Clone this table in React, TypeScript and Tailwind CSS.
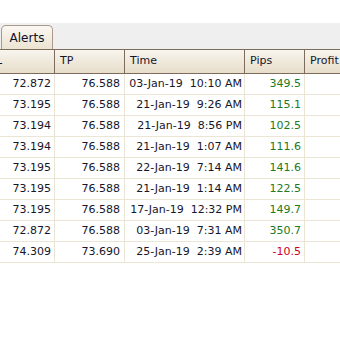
import React from 'react';

type Row = { sl: string; tp: string; time: string; pips: string };

const rows: Row[] = [
  { sl: '72.872', tp: '76.588', time: '03-Jan-19  10:10 AM', pips: '349.5' },
  { sl: '73.195', tp: '76.588', time: '21-Jan-19  9:26 AM', pips: '115.1' },
  { sl: '73.194', tp: '76.588', time: '21-Jan-19  8:56 PM', pips: '102.5' },
  { sl: '73.194', tp: '76.588', time: '21-Jan-19  1:07 AM', pips: '111.6' },
  { sl: '73.195', tp: '76.588', time: '22-Jan-19  7:14 AM', pips: '141.6' },
  { sl: '73.195', tp: '76.588', time: '21-Jan-19  1:14 AM', pips: '122.5' },
  { sl: '73.195', tp: '76.588', time: '17-Jan-19  12:32 PM', pips: '149.7' },
  { sl: '72.872', tp: '76.588', time: '03-Jan-19  7:31 AM', pips: '350.7' },
  { sl: '74.309', tp: '73.690', time: '25-Jan-19  2:39 AM', pips: '-10.5' }
];

const App = () => {
  return (
    <div className="w-[340px] h-[364px] bg-white overflow-hidden font-['DejaVu_Sans',sans-serif] text-[11px] text-[#16162a]">
      <div className="h-[23px]"></div>

      {/* Tab strip */}
      <div className="h-[26px] bg-[#efefef] flex items-end pl-[1px]">
        <div className="w-[52px] h-[24px] rounded-t-[5px] border border-b-0 border-[#a8998a] bg-gradient-to-b from-[#fbf8f2] to-[#ece3d1] flex items-center justify-center text-[12px] text-[#10102a]">
          Alerts
        </div>
      </div>

      {/* Header (first column is scrolled off, only the tail of "SL" shows) */}
      <div className="flex h-[25px] border-y border-[#7d6b5c] bg-gradient-to-b from-[#f8f5ee] to-[#e7ddca]">
        <div className="w-[55px] shrink-0 border-r border-[#7d6b5c] overflow-hidden flex items-center">
          <span className="ml-[-11px] whitespace-nowrap">SL</span>
        </div>
        <div className="w-[70px] shrink-0 border-r border-[#7d6b5c] flex items-center pl-[5px]">TP</div>
        <div className="w-[120px] shrink-0 border-r border-[#7d6b5c] flex items-center pl-[5px]">Time</div>
        <div className="w-[60px] shrink-0 border-r border-[#7d6b5c] flex items-center pl-[5px]">Pips</div>
        <div className="flex-1 flex items-center pl-[5px] whitespace-nowrap overflow-hidden">Profit</div>
      </div>

      {/* Body */}
      {rows.map((r, i) => (
        <div key={i} className="flex h-[21px] border-b border-[#ebe5d6]">
          <div className="w-[55px] shrink-0 border-r border-[#ebe5d6] flex items-center justify-end pr-[3px]">{r.sl}</div>
          <div className="w-[70px] shrink-0 border-r border-[#ebe5d6] flex items-center justify-end pr-[4px]">{r.tp}</div>
          <div className="w-[120px] shrink-0 border-r border-[#ebe5d6] flex items-center justify-end pr-[2px] whitespace-pre">{r.time}</div>
          <div
            className={`w-[60px] shrink-0 border-r border-[#ebe5d6] flex items-center justify-end pr-[3px] ${
              r.pips.startsWith('-') ? 'text-[#d0021b]' : 'text-[#217a1f]'
            }`}
          >
            {r.pips}
          </div>
          <div className="flex-1"></div>
        </div>
      ))}
    </div>
  );
};

export default App;
